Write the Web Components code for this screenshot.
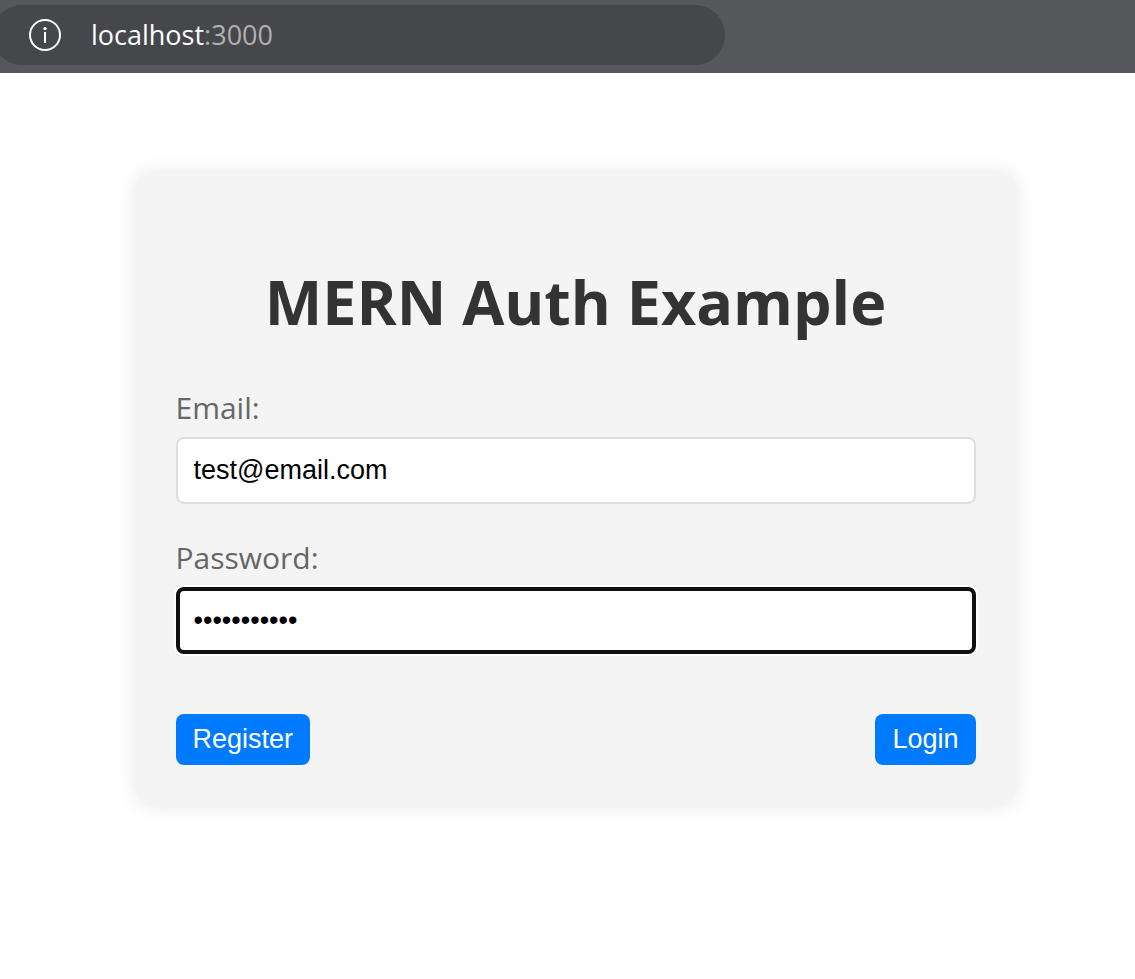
<!DOCTYPE html>
<html lang="en">
<head>
<meta charset="utf-8">
<meta name="viewport" content="width=device-width, initial-scale=1">
<title>MERN Auth Example</title>
<style>
  body { margin: 0; background: #fff; font-family: "Open Sans", "Noto Sans", sans-serif; }
</style>
</head>
<body>
<address-bar host="localhost" port=":3000"></address-bar>
<auth-card heading="MERN Auth Example">
  <form-field label="Email:" type="email" value="test@email.com"></form-field>
  <form-field label="Password:" type="password" value="password123" active></form-field>
  <action-button slot="actions">Register</action-button>
  <action-button slot="actions">Login</action-button>
</auth-card>

<template id="address-bar">
  <style>
    :host { display: block; background: #56575b; padding: 5px 0 8px; }
    .pill {
      display: flex; align-items: center; gap: 30px; box-sizing: border-box;
      width: calc(64% + 7px); min-width: 320px; height: 60px;
      margin-left: -8px; padding-left: 37px;
      border-radius: 30px; background: #46474a;
      font-size: 27px; line-height: 36px; color: #fff;
    }
    svg { display: block; flex: none; }
    .port { color: #b0b0b1; }
  </style>
  <div class="pill">
    <svg width="32" height="32" viewBox="0 0 32 32" aria-hidden="true">
      <circle cx="16" cy="16" r="15" fill="none" stroke="#fff" stroke-width="2"/>
      <circle cx="16" cy="9.6" r="1.7" fill="#fff"/>
      <path d="M16 13V24" stroke="#fff" stroke-width="2"/>
    </svg>
    <div><span class="host"></span><span class="port"></span></div>
  </div>
</template>

<template id="auth-card">
  <style>
    :host { display: block; padding: 100px 16px 40px 32px; }
    .card {
      box-sizing: border-box; max-width: 880px; margin: 0 auto; padding: 40px;
      border-radius: 16px; background: #f4f4f4; box-shadow: 0 0 20px rgba(0, 0, 0, .1);
    }
    h1 { margin: 45px 0 44px; font-size: 61px; line-height: 88px; text-align: center; color: #333; }
    .fields { display: grid; gap: 36px; }
    .actions { display: flex; justify-content: space-between; margin-top: 60px; }
  </style>
  <form class="card">
    <h1></h1>
    <div class="fields"><slot></slot></div>
    <div class="actions"><slot name="actions"></slot></div>
  </form>
</template>

<template id="form-field">
  <style>
    :host { display: block; }
    label { display: block; margin-bottom: 11px; font-size: 30px; line-height: 36px; color: #666; }
    input {
      display: block; box-sizing: border-box; width: 100%; height: 67px; padding: 0 16px;
      border: 2px solid #ddd; border-radius: 8px; outline: none; background: #fff; color: #000;
      font: 27px/32px "Liberation Sans", Arial, sans-serif;
    }
    :host([active]) input { padding: 0 14px; border: 4px solid #101010; box-shadow: 0 0 0 2px #fff; }
  </style>
  <label for="field"></label>
  <input id="field">
</template>

<template id="action-button">
  <style>
    :host { display: block; }
    button {
      display: block; height: 51px; padding: 0 17px 2px; border: 0; border-radius: 8px;
      background: #007bff; color: #fff; cursor: pointer;
      font: 27px/32px "Liberation Sans", Arial, sans-serif;
    }
  </style>
  <button type="button"><slot></slot></button>
</template>

<script>
  class Base extends HTMLElement {
    constructor() {
      super();
      const template = document.getElementById(this.localName);
      this.attachShadow({ mode: "open" }).append(template.content.cloneNode(true));
    }
    find(selector) { return this.shadowRoot.querySelector(selector); }
  }

  customElements.define("address-bar", class extends Base {
    connectedCallback() {
      this.find(".host").textContent = this.getAttribute("host");
      this.find(".port").textContent = this.getAttribute("port");
    }
  });

  customElements.define("auth-card", class extends Base {
    connectedCallback() { this.find("h1").textContent = this.getAttribute("heading"); }
  });

  customElements.define("form-field", class extends Base {
    connectedCallback() {
      this.find("label").textContent = this.getAttribute("label");
      const input = this.find("input");
      input.type = this.getAttribute("type");
      input.value = this.getAttribute("value");
    }
  });

  customElements.define("action-button", class extends Base {});
</script>
</body>
</html>
